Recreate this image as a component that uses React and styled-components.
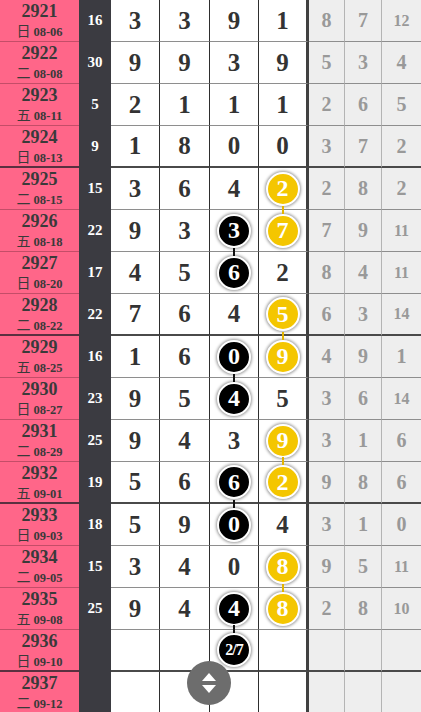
import React from "react";
import styled, { createGlobalStyle, css } from "styled-components";

const rows = [
  ["2921", "日", "08-06", 16, [3, 3, 9, 1], [8, 7, 12]],
  ["2922", "二", "08-08", 30, [9, 9, 3, 9], [5, 3, 4]],
  ["2923", "五", "08-11", 5, [2, 1, 1, 1], [2, 6, 5]],
  ["2924", "日", "08-13", 9, [1, 8, 0, 0], [3, 7, 2]],
  ["2925", "二", "08-15", 15, [3, 6, 4, "y2"], [2, 8, 2]],
  ["2926", "五", "08-18", 22, [9, 3, "b3", "y7"], [7, 9, 11]],
  ["2927", "日", "08-20", 17, [4, 5, "b6", 2], [8, 4, 11]],
  ["2928", "二", "08-22", 22, [7, 6, 4, "y5"], [6, 3, 14]],
  ["2929", "五", "08-25", 16, [1, 6, "b0", "y9"], [4, 9, 1]],
  ["2930", "日", "08-27", 23, [9, 5, "b4", 5], [3, 6, 14]],
  ["2931", "二", "08-29", 25, [9, 4, 3, "y9"], [3, 1, 6]],
  ["2932", "五", "09-01", 19, [5, 6, "b6", "y2"], [9, 8, 6]],
  ["2933", "日", "09-03", 18, [5, 9, "b0", 4], [3, 1, 0]],
  ["2934", "二", "09-05", 15, [3, 4, 0, "y8"], [9, 5, 11]],
  ["2935", "五", "09-08", 25, [9, 4, "b4", "y8"], [2, 8, 10]],
  ["2936", "日", "09-10", "", ["", "", "b2/7", ""], ["", "", ""]],
  ["2937", "二", "09-12", "", ["", "", "", ""], ["", "", ""]],
];

const GlobalStyle = createGlobalStyle`
  body {
    margin: 0;
    background: #fff;
    font-family: "Liberation Serif", "Noto Sans CJK SC", serif;
  }
`;

const Table = styled.div`
  display: grid;
  grid-template-columns: 79px 32px 49px 50px 49px 50px 36px 37px 39px;
  grid-auto-rows: 42px;
  width: 421px;
`;

const Cell = styled.div`
  box-sizing: border-box;
  display: flex;
  align-items: center;
  justify-content: center;
  border-bottom: ${(p) => (p.$group ? "2px solid #4a4a4a" : "1px solid #8e8e8e")};
`;

const IssueCell = styled(Cell)`
  flex-direction: column;
  background: #ff6689;
  color: #3a3a3a;
  border-bottom-color: ${(p) => (p.$group ? "#5a3040" : "#c44d68")};
  font-weight: bold;
  line-height: 1;
`;

const IssueNo = styled.div`
  font-size: 18px;
`;

const IssueDate = styled.div`
  font-size: 12.5px;
  margin-top: 5px;
  span {
    font-weight: normal;
    font-size: 14px;
    margin-right: 3px;
  }
`;

const SumCell = styled(Cell)`
  background: #3b3b41;
  color: #fff;
  font-weight: bold;
  font-size: 15px;
  border-bottom-color: #3b3b41;
`;

const DigitCell = styled(Cell)`
  color: #333;
  font-weight: bold;
  font-size: 25px;
  border-right: ${(p) => (p.$last ? "3px solid #404040" : "1px solid #2e2e2e")};
`;

const GreyCell = styled(Cell)`
  background: #eeeeee;
  color: #999;
  font-weight: bold;
  font-size: ${(p) => (p.$small ? "16px" : "20px")};
  border-right: ${(p) => (p.$last ? "none" : "1px solid #b4b4b4")};
`;

const Ball = styled.div`
  position: relative;
  box-sizing: border-box;
  width: 34px;
  height: 34px;
  border-radius: 50%;
  border: 2px solid #fff;
  box-shadow: 0 0 3px 1px rgba(0, 0, 0, 0.4);
  display: flex;
  align-items: center;
  justify-content: center;
  color: #fff;
  font-size: ${(p) => (p.$small ? "16px" : "24px")};
  letter-spacing: ${(p) => (p.$small ? "-1px" : "0")};
  background: ${(p) => (p.$yellow ? "#f4c600" : "#000")};
  ${(p) =>
    p.$link &&
    css`
      &::before {
        content: "";
        position: absolute;
        left: 50%;
        bottom: calc(100% + 2px);
        width: 2px;
        height: 8px;
        margin-left: -1px;
        background: ${p.$yellow ? "#e2b400" : "#111"};
      }
    `}
`;

const FloatButton = styled.div`
  position: fixed;
  left: 187px;
  top: 661px;
  width: 44px;
  height: 44px;
  border-radius: 50%;
  background: #6d6d6d;
  display: flex;
  flex-direction: column;
  align-items: center;
  justify-content: center;
  gap: 4px;
`;

const Arrow = styled.div`
  width: 0;
  height: 0;
  border-left: 7px solid transparent;
  border-right: 7px solid transparent;
  ${(p) =>
    p.$down
      ? css`
          border-top: 8px solid #fff;
        `
      : css`
          border-bottom: 8px solid #fff;
        `}
`;

const isMark = (v) => typeof v === "string" && (v[0] === "b" || v[0] === "y");

const App = () => {
  return (
    <>
      <GlobalStyle />
      <Table>
        {rows.map((r, i) => {
          const [no, day, date, sum, digits, greys] = r;
          const group = i % 4 === 3;
          const prev = i > 0 ? rows[i - 1][4] : null;
          return (
            <React.Fragment key={no}>
              <IssueCell $group={group}>
                <IssueNo>{no}</IssueNo>
                <IssueDate>
                  <span>{day}</span>
                  {date}
                </IssueDate>
              </IssueCell>
              <SumCell $group={group}>{sum}</SumCell>
              {digits.map((d, j) => (
                <DigitCell key={j} $group={group} $last={j === 3}>
                  {isMark(d) ? (
                    <Ball
                      $yellow={d[0] === "y"}
                      $small={d.length > 2}
                      $link={prev && isMark(prev[j])}
                    >
                      {d.slice(1)}
                    </Ball>
                  ) : (
                    d
                  )}
                </DigitCell>
              ))}
              {greys.map((g, j) => (
                <GreyCell key={j} $group={group} $last={j === 2} $small={g >= 10}>
                  {g}
                </GreyCell>
              ))}
            </React.Fragment>
          );
        })}
      </Table>
      <FloatButton>
        <Arrow />
        <Arrow $down />
      </FloatButton>
    </>
  );
};

export default App;
